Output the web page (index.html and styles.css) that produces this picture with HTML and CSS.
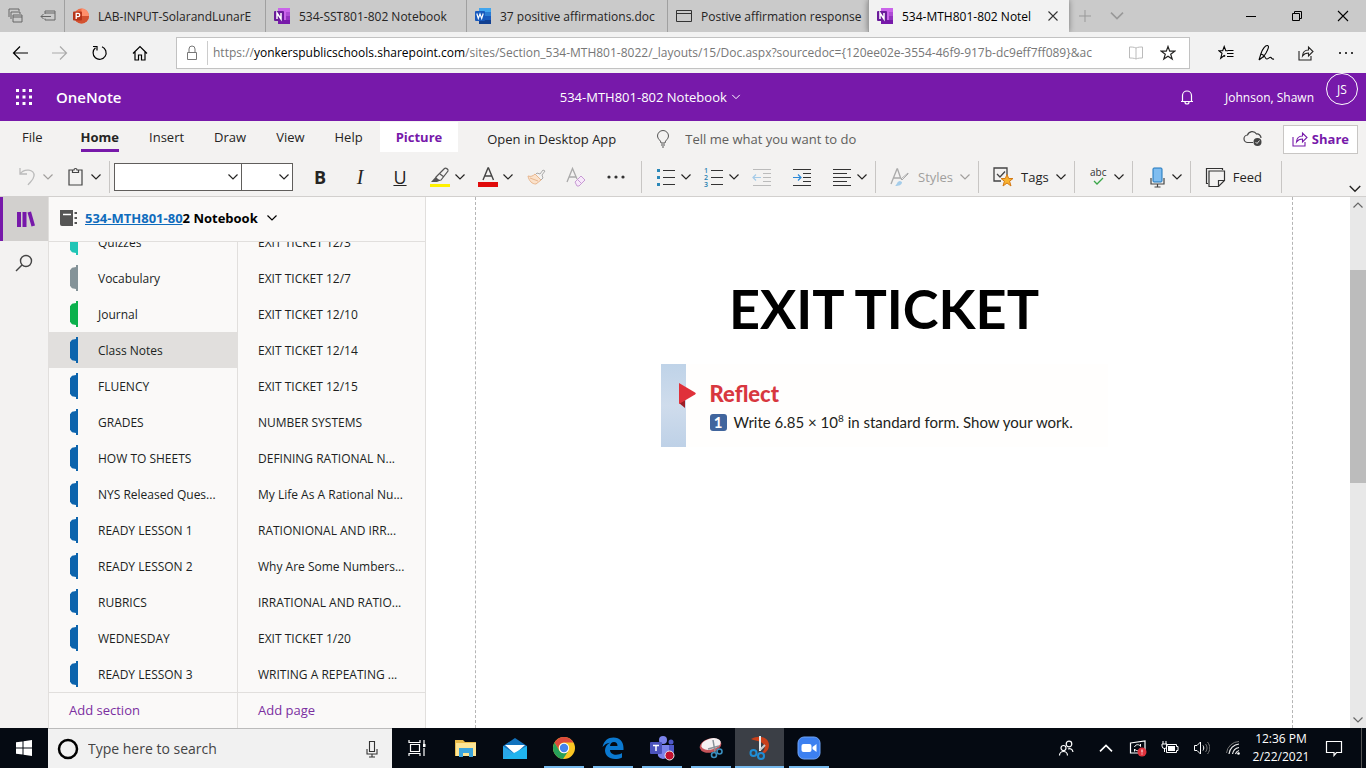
FILE: index.html
```
<!DOCTYPE html>
<html lang="en">
<head>
    <meta charset="UTF-8">
    <meta name="viewport" content="width=device-width, initial-scale=1.0">
    <title>534-MTH801-802 Notebook</title>
    <link rel="stylesheet" href="styles.css">
</head>
<body>
    <!-- Shared icons -->
    <svg class="defs" width="0" height="0">
        <symbol id="chev" viewBox="0 0 12 12"><path d="M1.5 3.5L6 8l4.5-4.5" fill="none" stroke="currentColor" stroke-width="1.2"/></symbol>
        <symbol id="onenote" viewBox="0 0 16 16"><path d="M4 0h12v16H4z" fill="#ca64ea"/><path d="M12 4h4v4h-4z" fill="#ae4bd5"/><path d="M12 8h4v4h-4z" fill="#9332bf"/><path d="M4 12h12v4H4z" fill="#7719aa"/><rect y="3" width="10" height="10" rx="1" fill="#6a1b9a"/><path d="M3 11V5l4 6V5" fill="none" stroke="#fff" stroke-width="1.5"/></symbol>
        <symbol id="star" viewBox="0 0 16 16"><path d="M8 1.5l1.7 4.7h5l-4 3 1.5 4.9L8 11.2l-4.2 2.9 1.5-4.9-4-3h5z" fill="none" stroke="currentColor" stroke-width="1.2"/></symbol>
        <symbol id="share" viewBox="0 0 16 16"><path d="M1 6v9h12v-4M4.5 11c.3-4 2.5-6 6-6V2L15 6.5 10.5 11V8c-2.5 0-4.5.8-6 3z" fill="none" stroke="currentColor" stroke-width="1.1"/></symbol>
    </svg>

    <!-- Browser tabs -->
    <div class="tab-strip">
        <button class="strip-btn" aria-label="Tabs set aside"><svg width="16" height="16" viewBox="0 0 16 16"><path d="M1 9V1h10v2M3 11V4h9v2M5 7h9v7H5zM5 9h9" fill="none" stroke="#666"/></svg></button>
        <button class="strip-btn" aria-label="Set tabs aside"><svg width="16" height="16" viewBox="0 0 16 16"><path d="M5 6V3h10v9H5v-1.5M5 5h10M11 8.5H1M3.5 6L1 8.5 3.5 11" fill="none" stroke="#666"/></svg></button>
        <a class="tab" href="#">
            <svg width="16" height="16" viewBox="0 0 16 16"><circle cx="8.5" cy="8" r="7.5" fill="#ed6c47"/><path d="M8.5.5A7.5 7.5 0 0 1 16 8H8.5z" fill="#ff8f6b"/><path d="M1 8h15a7.5 7.5 0 0 1-15 0z" fill="#d35230"/><rect y="3.5" width="9" height="9" rx="1" fill="#b7351a"/><path d="M3.2 11V5.3h1.9a1.5 1.5 0 0 1 0 3.3H3.5" fill="none" stroke="#fff" stroke-width="1.3"/></svg>
            <span>LAB-INPUT-SolarandLunarE</span>
        </a>
        <a class="tab" href="#">
            <svg width="16" height="16"><use href="#onenote"/></svg>
            <span>534-SST801-802 Notebook</span>
        </a>
        <a class="tab" href="#">
            <svg width="16" height="16" viewBox="0 0 16 16"><path d="M4 0h12v4H4z" fill="#41a5ee"/><path d="M4 4h12v4H4z" fill="#2b7cd3"/><path d="M4 8h12v4H4z" fill="#185abd"/><path d="M4 12h12v4H4z" fill="#103f91"/><rect y="3" width="10" height="10" rx="1" fill="#185abd"/><path d="M1.8 5.5l1.5 5L5 6l1.7 4.5 1.5-5" fill="none" stroke="#fff" stroke-width="1.2"/></svg>
            <span>37 positive affirmations.doc</span>
        </a>
        <a class="tab" href="#">
            <svg width="16" height="16" viewBox="0 0 16 16"><path d="M.5 2.5h15v11H.5zM.5 5.5h15" fill="none" stroke="#333"/></svg>
            <span>Postive affirmation response</span>
        </a>
        <a class="tab active" href="#">
            <svg width="16" height="16"><use href="#onenote"/></svg>
            <span>534-MTH801-802 Notel</span>
            <svg width="12" height="12" viewBox="0 0 12 12"><path d="M1.5 1.5l9 9m0-9l-9 9" stroke="#333" stroke-width="1.1"/></svg>
        </a>
        <button class="strip-btn faint" aria-label="New tab"><svg width="14" height="14" viewBox="0 0 14 14"><path d="M7 1v12M1 7h12" stroke="currentColor"/></svg></button>
        <button class="strip-btn faint" aria-label="Tab previews"><svg width="16" height="16"><use href="#chev"/></svg></button>
        <div class="window-btns">
            <button aria-label="Minimize"><svg width="12" height="12" viewBox="0 0 12 12"><path d="M1 6.5h10" stroke="#000"/></svg></button>
            <button aria-label="Restore"><svg width="12" height="12" viewBox="0 0 12 12"><path d="M1.5 3.5h7v7h-7zM3.5 3.5v-2h7v7h-2" fill="none" stroke="#000"/></svg></button>
            <button aria-label="Close"><svg width="12" height="12" viewBox="0 0 12 12"><path d="M1 1l10 10m0-10L1 11" stroke="#000" stroke-width="1.1"/></svg></button>
        </div>
    </div>

    <!-- Address bar -->
    <div class="nav-bar">
        <button aria-label="Back"><svg width="16" height="16" viewBox="0 0 16 16"><path d="M16 8H1.5M8 1.5L1.5 8 8 14.5" fill="none" stroke="#000" stroke-width="1.2"/></svg></button>
        <button aria-label="Forward"><svg width="16" height="16" viewBox="0 0 16 16"><path d="M0 8h14.5M8 1.5L14.5 8 8 14.5" fill="none" stroke="#aaa" stroke-width="1.2"/></svg></button>
        <button aria-label="Refresh"><svg width="16" height="16" viewBox="0 0 16 16"><path d="M3.5 2.8a6.5 6.5 0 1 0 6.5-1M1 1.5h4v4" fill="none" stroke="#000" stroke-width="1.2"/></svg></button>
        <button aria-label="Home"><svg width="16" height="16" viewBox="0 0 16 16"><path d="M1 8.5L8 1.5l7 7M3 7v8h3.5v-5h3v5H13V7" fill="none" stroke="#000" stroke-width="1.2"/></svg></button>
        <div class="address">
            <svg width="16" height="16" viewBox="0 0 16 16"><path d="M3.5 7.5h9v7h-9zM5 7.5V4a3 3 0 0 1 6 0v3.5" fill="none" stroke="#777"/></svg>
            <div class="url" role="textbox" aria-label="Address" contenteditable="true" spellcheck="false">https://<b>yonkerspublicschools.sharepoint.com</b>/sites/Section_534-MTH801-8022/_layouts/15/Doc.aspx?sourcedoc={120ee02e-3554-46f9-917b-dc9eff7ff089}&amp;ac</div>
            <button aria-label="Reading view"><svg width="16" height="16" viewBox="0 0 16 16"><path d="M8 3c-2-1-4.5-1-6.5-1v11c2 0 4.5 0 6.5 1 2-1 4.5-1 6.5-1V2c-2 0-4.5 0-6.5 1zm0 0v11" fill="none" stroke="#bbb"/></svg></button>
            <button aria-label="Favorite"><svg width="16" height="16"><use href="#star"/></svg></button>
        </div>
        <button aria-label="Favorites"><svg width="16" height="16" viewBox="0 0 16 16"><path d="M10 5.8H7.8L6.2 1.5 4.7 5.8H.8l3.2 2.5-1.3 4.9L6.2 10.5l1 .8M9 8.5h6.5M9 11.5h6.5M10 5.5h5.5" fill="none" stroke="#000" stroke-width="1.1"/></svg></button>
        <button aria-label="Notes"><svg width="18" height="18" viewBox="0 0 18 18"><path d="M2 16l2-6.5C5.5 5 8.5 1 10.5 1.5s.5 4-1.5 7.5L6 13.5M4 10l3 1.5M2 16l4.5-3.5c2-1 1.5 3 3.5 2.5s3-2.5 4-1.5 1.5 2 3 1.5" fill="none" stroke="#000" stroke-width="1.1"/></svg></button>
        <button aria-label="Share page"><svg width="16" height="16"><use href="#share"/></svg></button>
        <button aria-label="More"><svg width="16" height="16" viewBox="0 0 16 16"><circle cx="2" cy="8" r="1"/><circle cx="8" cy="8" r="1"/><circle cx="14" cy="8" r="1"/></svg></button>
    </div>

    <!-- OneNote header -->
    <header class="app-header">
        <button class="waffle" aria-label="App launcher"><svg width="16" height="16" viewBox="0 0 16 16" fill="#fff"><path d="M0 0h3v3H0zM6.5 0h3v3h-3zM13 0h3v3h-3zM0 6.5h3v3H0zM6.5 6.5h3v3h-3zM13 6.5h3v3h-3zM0 13h3v3H0zM6.5 13h3v3h-3zM13 13h3v3h-3z"/></svg></button>
        <a class="brand" href="#">OneNote</a>
        <button class="doc-title">534-MTH801-802 Notebook <svg width="10" height="10"><use href="#chev"/></svg></button>
        <button class="bell" aria-label="Notifications"><svg width="16" height="16" viewBox="0 0 16 16"><path d="M2 12.5h12M3.5 12.5V6.5a4.5 4.5 0 0 1 9 0v6M6 13a2 2 0 0 0 4 0" fill="none" stroke="#fff" stroke-width="1.2"/></svg></button>
        <span class="user">Johnson, Shawn</span>
        <button class="avatar">JS</button>
    </header>

    <!-- Ribbon -->
    <div class="ribbon-tabs">
        <button class="file">File</button>
        <button class="selected">Home</button>
        <button>Insert</button>
        <button>Draw</button>
        <button>View</button>
        <button>Help</button>
        <button class="context">Picture</button>
        <a class="desktop-link" href="#">Open in Desktop App</a>
        <svg width="14" height="18" viewBox="0 0 14 18"><path d="M5 13c0-3-3.5-3.5-3.5-7a5.5 5.5 0 0 1 11 0c0 3.5-3.5 4-3.5 7zM5 15h4M6 17h2" fill="none" stroke="#555"/></svg>
        <input class="tell-me" type="text" aria-label="Tell me what you want to do" placeholder="Tell me what you want to do">
        <svg width="20" height="18" viewBox="0 0 20 18"><path d="M10 12.5H5A3.7 3.7 0 0 1 4.5 5a5 5 0 0 1 9-1A4 4 0 0 1 18 8" fill="none" stroke="#444" stroke-width="1.2"/><circle cx="14.5" cy="12" r="4" fill="#444"/><path d="M12.5 12l1.5 1.5 2.5-3" fill="none" stroke="#ddd"/></svg>
        <button class="share-btn"><svg width="16" height="16"><use href="#share"/></svg>Share</button>
    </div>
    <div class="toolbar">
        <button class="tool undo" aria-label="Undo"><svg width="24" height="24" viewBox="0 0 24 24"><path d="M4 3v6h7M4 9c4-6 15-5 14 2-.5 4-4 6-6 9" fill="none" stroke="#bbb" stroke-width="1.3"/></svg><svg class="chev"><use href="#chev"/></svg></button>
        <button class="tool" aria-label="Paste"><svg width="24" height="24" viewBox="0 0 24 24"><path d="M9 5H5v15h13V5h-4M8.5 7.5V5H10a1.5 1.5 0 0 1 3 0h1.5v2.5z" fill="none" stroke="#444" stroke-width="1.2"/></svg><svg class="chev"><use href="#chev"/></svg></button>
        <i class="sep"></i>
        <label class="drop font-name"><select aria-label="Font"><option></option></select><svg class="chev"><use href="#chev"/></svg></label>
        <label class="drop font-size"><select aria-label="Font size"><option></option></select><svg class="chev"><use href="#chev"/></svg></label>
        <button class="tool letter"><b>B</b></button>
        <button class="tool letter"><em>I</em></button>
        <button class="tool letter"><u>U</u></button>
        <button class="tool" aria-label="Highlight"><svg width="24" height="24" viewBox="0 0 24 24"><path d="M2 19h20v3H2z" fill="#fff100"/><path d="M8 12l8.5-8.5c1-1 4 .5 3.5 2.5L13 15l-3 .5-2-1.5zM12 9l4 3" fill="none" stroke="#555" stroke-width="1.2"/><path d="M7.5 12L12 15.5 9 17H3z" fill="#555"/></svg><svg class="chev"><use href="#chev"/></svg></button>
        <button class="tool" aria-label="Font color"><svg width="24" height="24" viewBox="0 0 24 24"><path d="M2 17h20v5H2z" fill="#e00b0b"/><path d="M7 15l5-12h.5l5 12M8.5 11h7.5" fill="none" stroke="#444" stroke-width="1.4"/></svg><svg class="chev"><use href="#chev"/></svg></button>
        <button class="tool" aria-label="Format painter"><svg width="24" height="24" viewBox="0 0 24 24"><path d="M13 8l3 1 3-4 2 1-3 4 1 3-2 2-6-5z" fill="none" stroke="#aaa"/><path d="M11 9l6 6-5 4C8 19 5 16 4 11c3 1 5 0 7-2z" fill="#fbe2cb" stroke="#e8b68e"/><path d="M6 13l8 3" stroke="#e8b68e"/></svg></button>
        <button class="tool" aria-label="Clear formatting"><svg width="24" height="24" viewBox="0 0 24 24"><path d="M3 17L8.5 3.5 13 14M5 12h7" fill="none" stroke="#aaa" stroke-width="1.3"/><path d="M11 17l6-6 4 4-6 6h-2z" fill="#f7e8fa" stroke="#c79bd4"/><path d="M13.5 14.5l4 4" stroke="#c79bd4"/></svg></button>
        <button class="tool" aria-label="More font options"><svg width="24" height="24" viewBox="0 0 24 24" fill="#333"><circle cx="5" cy="12" r="1.6"/><circle cx="12" cy="12" r="1.6"/><circle cx="19" cy="12" r="1.6"/></svg></button>
        <i class="sep"></i>
        <button class="tool" aria-label="Bullets"><svg width="24" height="24" viewBox="0 0 24 24"><path d="M9 5.5h12M9 12.5h12M9 19.5h12" stroke="#333" stroke-width="1.2"/><path d="M3 4h3v3H3zM3 11h3v3H3zM3 18h3v3H3z" fill="#2b88b8"/></svg><svg class="chev"><use href="#chev"/></svg></button>
        <button class="tool" aria-label="Numbering"><svg width="24" height="24" viewBox="0 0 24 24"><path d="M9 5.5h12M9 12.5h12M9 19.5h12" stroke="#333" stroke-width="1.2"/><g fill="#1f7fb0" font-family="Open Sans, sans-serif" font-size="7" font-weight="600"><text x="2" y="8">1</text><text x="2" y="15">2</text><text x="2" y="22">3</text></g></svg><svg class="chev"><use href="#chev"/></svg></button>
        <button class="tool" aria-label="Decrease indent"><svg width="24" height="24" viewBox="0 0 24 24"><path d="M3 4.5h18M13 8.5h8M13 12.5h8M13 16.5h8M3 20.5h18" stroke="#bbb" stroke-width="1.2"/><path d="M11 12.5H3M6 9.5l-3 3 3 3" fill="none" stroke="#a5cbe8" stroke-width="1.2"/></svg></button>
        <button class="tool" aria-label="Increase indent"><svg width="24" height="24" viewBox="0 0 24 24"><path d="M3 4.5h18M13 8.5h8M13 12.5h8M13 16.5h8M3 20.5h18" stroke="#333" stroke-width="1.2"/><path d="M3 12.5h8M8 9.5l3 3-3 3" fill="none" stroke="#2b88d8" stroke-width="1.2"/></svg></button>
        <button class="tool" aria-label="Align"><svg width="24" height="24" viewBox="0 0 24 24"><path d="M3 4.5h18M3 8.5h14M3 12.5h18M3 16.5h14M3 20.5h18" stroke="#333" stroke-width="1.2"/></svg><svg class="chev"><use href="#chev"/></svg></button>
        <i class="sep"></i>
        <button class="tool" disabled><svg width="24" height="24" viewBox="0 0 24 24"><path d="M3 19L9 4h.5L13 14M5.5 13H12" fill="none" stroke="#aaa" stroke-width="1.3"/><path d="M20 9l-6 6-1-1 7-6z" fill="#fff" stroke="#aaa"/><path d="M7 21c2-1 2-5 5-5l2 1c0 3-3 4-7 4z" fill="#a5cdea"/></svg><span>Styles</span><svg class="chev"><use href="#chev"/></svg></button>
        <i class="sep"></i>
        <button class="tool"><svg width="24" height="24" viewBox="0 0 24 24"><path d="M10 16H3V3h13v7" fill="none" stroke="#444" stroke-width="1.3"/><path d="M6 9l3 3 5-5.5" fill="none" stroke="#444" stroke-width="1.3"/><path d="M16 9.5l1.7 4h4.3l-3.4 2.7 1.4 4.8-4-3-4 3 1.4-4.8L10 13.5h4.3z" fill="#f9b32f" stroke="#d47a14"/></svg><span>Tags</span><svg class="chev"><use href="#chev"/></svg></button>
        <i class="sep"></i>
        <button class="tool" aria-label="Spelling"><svg width="24" height="24" viewBox="0 0 24 24"><text x="3" y="11" font-family="Open Sans, sans-serif" font-size="10" fill="#333">abc</text><path d="M7 16l3 3 6-6" fill="none" stroke="#3aa648" stroke-width="1.3"/></svg><svg class="chev"><use href="#chev"/></svg></button>
        <i class="sep"></i>
        <button class="tool" aria-label="Dictate"><svg width="24" height="24" viewBox="0 0 24 24"><rect x="8" y="3" width="9" height="14" rx="1" fill="#7fbdf0" stroke="#1b75bc"/><path d="M6 13v6h13v-6M12.5 19v3M9.5 22h6" fill="none" stroke="#444" stroke-width="1.2"/></svg><svg class="chev"><use href="#chev"/></svg></button>
        <i class="sep"></i>
        <button class="tool feed"><svg width="24" height="24" viewBox="0 0 24 24"><path d="M5 18.5H3.5V3.5h16V5M6 6h15.5v9.5l-6 6H6zM21.5 15.5h-6v6" fill="none" stroke="#333" stroke-width="1.2"/></svg><span>Feed</span></button>
        <i class="sep"></i>
        <button class="collapse" aria-label="Collapse ribbon"><svg width="14" height="14"><use href="#chev"/></svg></button>
    </div>

    <main class="workspace">
        <div class="rail">
            <button class="selected" aria-label="Notebooks"><svg width="20" height="18" viewBox="0 0 20 18" fill="#7719aa"><path d="M1 2h4v15H1zM6.5 2h4v15h-4zM11.5 2.5L15 1.5l4 14-3.5 1z"/></svg></button>
            <button aria-label="Search"><svg width="18" height="18" viewBox="0 0 18 18"><circle cx="11" cy="7" r="5.5" fill="none" stroke="#444" stroke-width="1.4"/><path d="M7 11l-6 6" stroke="#444" stroke-width="1.4"/></svg></button>
        </div>

        <nav class="sidebar">
            <div class="notebook">
                <svg width="17" height="18" viewBox="0 0 17 18"><path d="M0 1h13v16H2a2 2 0 0 1-2-2zM14.5 3H17v2h-2.5zM14.5 8H17v2h-2.5zM14.5 13H17v2h-2.5z" fill="#555"/><path d="M3 5.5h8" stroke="#fff" stroke-width="1.5"/></svg>
                <a href="#"><u>534-MTH801-80</u>2 Notebook</a>
                <svg width="12" height="12"><use href="#chev"/></svg>
            </div>
            <div class="column sections">
                <ul>
                    <li class="teal"><a href="#">Quizzes</a></li>
                    <li class="gray"><a href="#">Vocabulary</a></li>
                    <li class="green"><a href="#">Journal</a></li>
                    <li class="current"><a href="#">Class Notes</a></li>
                    <li><a href="#">FLUENCY</a></li>
                    <li><a href="#">GRADES</a></li>
                    <li><a href="#">HOW TO SHEETS</a></li>
                    <li><a href="#">NYS Released Ques...</a></li>
                    <li><a href="#">READY LESSON 1</a></li>
                    <li><a href="#">READY LESSON 2</a></li>
                    <li><a href="#">RUBRICS</a></li>
                    <li><a href="#">WEDNESDAY</a></li>
                    <li><a href="#">READY LESSON 3</a></li>
                </ul>
                <button class="add">Add section</button>
            </div>
            <div class="column pages">
                <ul>
                    <li><a href="#">EXIT TICKET 12/3</a></li>
                    <li><a href="#">EXIT TICKET 12/7</a></li>
                    <li><a href="#">EXIT TICKET 12/10</a></li>
                    <li><a href="#">EXIT TICKET 12/14</a></li>
                    <li><a href="#">EXIT TICKET 12/15</a></li>
                    <li><a href="#">NUMBER SYSTEMS</a></li>
                    <li><a href="#">DEFINING RATIONAL N...</a></li>
                    <li><a href="#">My Life As A Rational Nu...</a></li>
                    <li><a href="#">RATIONIONAL AND IRR...</a></li>
                    <li><a href="#">Why Are Some Numbers...</a></li>
                    <li><a href="#">IRRATIONAL AND RATIO...</a></li>
                    <li><a href="#">EXIT TICKET 1/20</a></li>
                    <li><a href="#">WRITING A REPEATING ...</a></li>
                </ul>
                <button class="add">Add page</button>
            </div>
        </nav>

        <section class="canvas">
            <article class="page">
                <h1>EXIT TICKET</h1>
                <div class="problem">
                    <div class="strip"></div>
                    <svg width="20" height="28" viewBox="0 0 20 28"><path d="M2 22l6 5v-8z" fill="#9e1f26"/><path d="M2 2l16 9.5c1 .7 1 1.3 0 2L2 23z" fill="#e0313a"/></svg>
                    <div class="problem-text">
                        <h2>Reflect</h2>
                        <p><span class="num">1</span>Write 6.85 × 10<sup>8</sup> in standard form. Show your work.</p>
                    </div>
                </div>
            </article>
        </section>

        <div class="scrollbar">
            <svg width="12" height="12"><use href="#chev" transform="rotate(180 6 6)"/></svg>
            <div class="track"><div class="thumb"></div></div>
            <svg width="12" height="12"><use href="#chev"/></svg>
        </div>
    </main>

    <!-- Windows taskbar -->
    <footer class="taskbar">
        <button class="start" aria-label="Start"><svg width="16" height="16" viewBox="0 0 16 16" fill="#fff"><path d="M0 2.3L6.5 1.4v6.1H0zM7.5 1.2L16 0v7.5H7.5zM0 8.5h6.5v6.1L0 13.7zM7.5 8.5H16V16l-8.5-1.2z"/></svg></button>
        <label class="search">
            <svg width="22" height="22" viewBox="0 0 22 22"><circle cx="11" cy="11" r="9" fill="none" stroke="#000" stroke-width="2.5"/></svg>
            <input type="text" aria-label="Type here to search" placeholder="Type here to search">
            <svg width="12" height="18" viewBox="0 0 12 18"><path d="M3.5 1.5h5v10h-5zM1 9v5h10V9M6 14v3M3 17h6" fill="none" stroke="#333" stroke-width="1.1"/></svg>
        </label>
        <button class="app" aria-label="Task view"><svg width="18" height="18" viewBox="0 0 18 18"><path d="M1 1v2.5h11V1M2.5 5.5h9v7h-9zM1 17v-2.5h11V17M16 1v4M16 9v8" fill="none" stroke="#fff" stroke-width="1.2"/><path d="M15 5h2.5v3H15z" fill="#fff"/></svg></button>
        <button class="app" aria-label="File Explorer"><svg width="24" height="24" viewBox="0 0 24 24"><path d="M1 4h8l2 2h11v14H1z" fill="#e9bb4a"/><path d="M2 7h20v13H2z" fill="#fde595"/><path d="M5 21v-9h14v9h-4v-4H9v4z" fill="#3ba4dc"/></svg></button>
        <button class="app" aria-label="Mail"><svg width="24" height="24" viewBox="0 0 24 24"><path d="M0 10L12 2l12 8v13H0z" fill="#1272bd"/><path d="M2 9h20l-10 9z" fill="#fff"/><path d="M0 10l12 8-8 5H0z" fill="#2aa7e8"/><path d="M24 10v13H0z" fill="#1fb4ee"/></svg></button>
        <button class="app open" aria-label="Chrome"><svg width="24" height="24" viewBox="0 0 24 24"><circle cx="12" cy="12" r="11" fill="#fbc623"/><path d="M2.5 6.5A11 11 0 0 1 21.5 6.5H12a5.5 5.5 0 0 0-4.8 8.2z" fill="#dd4a3c"/><path d="M2.5 6.5A11 11 0 0 0 11 23l5.7-8.5a5.5 5.5 0 0 1-9.5 0z" fill="#27a05a"/><circle cx="12" cy="12" r="5.2" fill="#fff"/><circle cx="12" cy="12" r="4.2" fill="#4583ec"/></svg></button>
        <button class="app open" aria-label="Edge"><svg width="24" height="24" viewBox="0 0 24 24"><path d="M1.5 11C3 4.5 7 1.5 12.5 1.5 19 1.5 22.5 6 22.5 12v2H9c.3 3.3 3 4.7 6 4.7 2.5 0 4.5-.6 6-1.6v4.4c-2 1-4.5 1.5-7 1.5-6 0-10-3.5-10-8.7 0-3.3 2-6.3 5-7.6-3 .4-5.5 1.8-7.5 4.3zM9 10h7.5c0-2.5-1.3-4-3.5-4S9.3 7.6 9 10z" fill="#0b79d0"/></svg></button>
        <button class="app open" aria-label="Teams"><svg width="28" height="28" viewBox="0 0 28 28"><circle cx="15" cy="6" r="4" fill="#7b83eb"/><circle cx="23" cy="8" r="2.5" fill="#5059c9"/><path d="M9 11h12v9a6 6 0 0 1-11 2z" fill="#7b83eb"/><path d="M21 11h5v7a4 4 0 0 1-5 3z" fill="#5059c9"/><rect x="2" y="8" width="12" height="12" rx="1" fill="#4b53bc"/><path d="M5 11.5h6M8 11.5V17" stroke="#fff" stroke-width="1.5"/><circle cx="21.5" cy="21.5" r="4.5" fill="#c4122f" stroke="#eee"/></svg></button>
        <button class="app open" aria-label="Snipping Tool"><svg width="24" height="24" viewBox="0 0 24 24"><ellipse cx="11.5" cy="9.5" rx="11" ry="7" fill="#c6545a" transform="rotate(-15 11.5 9.5)"/><ellipse cx="12" cy="8" rx="10" ry="5.5" fill="#f5f1f2" transform="rotate(-15 12 8)"/><path d="M14 4l2 12M9 13l11-3" stroke="#8a9299" stroke-width="1.5"/><g fill="none" stroke="#3a8fbf" stroke-width="1.6"><circle cx="15" cy="19" r="2.5"/><circle cx="20.5" cy="15.5" r="2.5"/></g></svg></button>
        <button class="app open focused" aria-label="Snip and Sketch"><svg width="24" height="24" viewBox="0 0 24 24"><path d="M3 3c9-5 18-1 18 6s-6 10-11 9c5-1 8-5 6-9S8 5 3 3z" fill="#c9401a"/><path d="M11 0h2v15h-2z" fill="#e8edf0"/><path d="M12 14l5-5" stroke="#ccc" stroke-width="2"/><g fill="none" stroke="#1f8ed6" stroke-width="2"><circle cx="5.5" cy="17" r="3"/><circle cx="13" cy="20" r="3"/></g></svg></button>
        <button class="app open" aria-label="Zoom"><svg width="24" height="24" viewBox="0 0 24 24"><rect x="1" y="1" width="22" height="22" rx="6" fill="#3c80f0" stroke="#6fa3f6"/><rect x="4.5" y="8" width="10" height="8" rx="2" fill="#fff"/><path d="M15.5 11l4-3v8l-4-3z" fill="#fff"/></svg></button>

        <div class="tray">
            <button class="people" aria-label="People"><svg width="16" height="16" viewBox="0 0 16 16"><circle cx="11" cy="4" r="2.8" fill="none" stroke="#fff" stroke-width="1.2"/><circle cx="5.5" cy="8" r="2.5" fill="none" stroke="#fff" stroke-width="1.2"/><path d="M1.5 15.5a4 4 0 0 1 8 0M10 9c2-1 4.5 0 5 3" fill="none" stroke="#fff" stroke-width="1.2"/></svg></button>
            <button aria-label="Show hidden icons"><svg width="16" height="16"><use href="#chev" transform="rotate(180 8 8)"/></svg></button>
            <button aria-label="Update required"><svg width="18" height="18" viewBox="0 0 18 18"><path d="M1.5 4L16 2v12L1.5 14z" fill="none" stroke="#fff" stroke-width="1.2"/><path d="M5.5 8c1-3 5-3 6-.5V5M11.5 9.5c-1 2.5-4.5 3-6 .5v2.5" fill="none" stroke="#fff"/><circle cx="13" cy="13" r="4.5" fill="#e0323c"/><path d="M13 10.5v3M13 14.5v1" stroke="#fff"/></svg></button>
            <button aria-label="Battery"><svg width="18" height="16" viewBox="0 0 18 16"><path d="M2 1v3M5 1v3M1 4h5v2a2 2 0 0 1-5 0zM3.5 8v4M5.5 12.5v-8h10v2H17v4h-1.5v2z" fill="none" stroke="#fff"/><path d="M7 6h7v5H7z" fill="#fff"/></svg></button>
            <button aria-label="Volume"><svg width="16" height="16" viewBox="0 0 16 16"><path d="M.5 5.5H3L6.5 2v12L3 10.5H.5z" fill="none" stroke="#fff"/><path d="M9 5.5c1 1.5 1 3.5 0 5" fill="none" stroke="#fff"/><path d="M11.5 4c2 2.5 2 5.5 0 8M13.5 2c3 4 3 8 0 12" fill="none" stroke="#777"/></svg></button>
            <button aria-label="Network"><svg width="16" height="16" viewBox="0 0 16 16"><path d="M3 14A11 11 0 0 1 13 4M6.5 14A8 8 0 0 1 13 7.5M9.5 14A5 5 0 0 1 13 10.5" fill="none" stroke="#eee" stroke-width="1.2"/><path d="M.5 13A13 13 0 0 1 13 1.5" fill="none" stroke="#777"/><circle cx="12.5" cy="13.5" r="1.3" fill="#fff"/></svg></button>
            <button class="clock"><time>12:36 PM</time><time>2/22/2021</time></button>
            <button class="action" aria-label="Action center"><svg width="18" height="18" viewBox="0 0 18 18"><path d="M1.5 2.5h15v11h-5l-2.5 3v-3H1.5z" fill="none" stroke="#fff" stroke-width="1.2"/></svg></button>
        </div>
    </footer>
</body>
</html>
```
FILE: styles.css
```
* {
    box-sizing: border-box;
}

body {
    margin: 0;
    height: 100vh;
    display: flex;
    flex-direction: column;
    overflow: hidden;
    font-family: "Open Sans", "Noto Sans", sans-serif;
    font-size: 13px;
    color: #252423;
    background: #fff;
}

button,
input,
select {
    font: inherit;
    color: inherit;
    background: none;
    border: 0;
    padding: 0;
    outline: 0;
}

button {
    display: flex;
    align-items: center;
    justify-content: center;
    white-space: nowrap;
}

a {
    color: inherit;
    text-decoration: none;
}

svg {
    flex: none;
}

.defs {
    position: absolute;
}

/* Browser tabs */
.tab-strip {
    display: flex;
    height: 32px;
    flex: none;
    background: #cacaca;
}

.strip-btn {
    width: 32px;
}

.faint {
    color: #999;
}

.tab {
    display: flex;
    align-items: center;
    gap: 9px;
    flex: 0 1 201px;
    min-width: 0;
    padding: 0 8px;
    border-left: 1px solid #a0a0a0;
    font-size: 12px;
}

.tab span {
    flex: 1;
    white-space: nowrap;
}

.tab.active {
    background: #f2f2f2;
    color: #000;
    padding-right: 10px;
    box-shadow: 0 0 6px rgba(0,0,0,0.4);
    clip-path: inset(0 -8px 0 -8px);
}

.window-btns {
    display: flex;
    margin-left: auto;
}

.window-btns button {
    width: 46px;
}

/* Address bar */
.nav-bar {
    display: flex;
    align-items: center;
    height: 41px;
    flex: none;
    background: #f2f2f2;
}

.nav-bar button {
    width: 40px;
    height: 32px;
}

.address {
    display: flex;
    align-items: center;
    flex: 1;
    min-width: 0;
    height: 32px;
    margin: 0 16px;
    padding-left: 7px;
    background: #fff;
    border: 1px solid #c2c2c2;
}

.url {
    flex: 1;
    min-width: 0;
    height: 24px;
    margin-left: 7px;
    padding-left: 5px;
    font-size: 12px;
    line-height: 24px;
    border-left: 1px solid #ccc;
    overflow: hidden;
    white-space: nowrap;
    color: #777;
}

.url b {
    font-weight: 400;
    color: #000;
}

.address .url + button {
    width: 32px;
}

.address button:last-child {
    width: 32px;
    margin-right: 5px;
}

/* OneNote header */
.app-header {
    display: flex;
    align-items: center;
    height: 48px;
    flex: none;
    background: #7719aa;
    color: #fff;
}

.waffle {
    width: 48px;
    height: 48px;
}

.brand {
    margin-left: 8px;
    font-size: 15px;
    font-weight: 600;
}

.doc-title {
    flex: 1;
    gap: 4px;
}

.bell {
    width: 16px;
    margin-right: 30px;
}

.user {
    font-size: 12px;
}

.avatar {
    align-self: flex-start;
    width: 32px;
    height: 32px;
    margin: 0 8px 0 12px;
    border: 1px solid #fff;
    border-radius: 50%;
    font-size: 12px;
}

/* Ribbon */
.ribbon-tabs {
    display: flex;
    align-items: center;
    height: 36px;
    flex: none;
    padding-left: 7px;
    background: #f3f2f1;
}

.ribbon-tabs button {
    height: 30px;
    padding: 0 15px;
    margin-bottom: 4px;
}

.ribbon-tabs .file {
    margin-right: 8px;
}

.ribbon-tabs .selected {
    font-weight: 700;
    background: linear-gradient(#7719aa, #7719aa) center bottom / calc(100% - 30px) 3px no-repeat;
}

.ribbon-tabs .context {
    margin-left: 2px;
    padding: 0 16px;
    font-weight: 700;
    color: #7719aa;
    background: #fff;
}

.desktop-link {
    margin: 0 40px 0 29px;
}

.tell-me {
    flex: 1;
    min-width: 0;
    margin-left: 15px;
}

.tell-me::placeholder {
    color: #605e5c;
    opacity: 1;
}

.ribbon-tabs .share-btn {
    height: 29px;
    gap: 4px;
    margin: 0 8px 0 20px;
    padding: 0 8px;
    font-weight: 700;
    color: #7719aa;
    background: #fff;
    border: 1px solid #c8c6c4;
}

.toolbar {
    display: flex;
    align-items: center;
    height: 40px;
    flex: none;
    padding-left: 8px;
    background: #f3f2f1;
    border-bottom: 1px solid #d2d0ce;
}

.tool {
    height: 32px;
    padding-left: 8px;
}

.tool > svg:only-child,
.letter > * {
    margin-right: 8px;
}

.tool > span {
    margin: 0 4px 0 6px;
}

.tool:disabled,
.undo {
    color: #a19f9d;
}

.letter > * {
    width: 24px;
    font-size: 18px;
    text-align: center;
    font-weight: 400;
    line-height: 24px;
}

.letter b {
    font-weight: 700;
}

.letter em {
    font-family: "Liberation Serif", serif;
    font-size: 20px;
}

.chev {
    width: 12px;
    height: 12px;
    margin: 0 2px;
}

.feed {
    padding-right: 10px;
}

.sep {
    width: 1px;
    height: 32px;
    margin: 0 4px 0 5px;
    background: #c8c6c4;
}

.drop {
    display: grid;
    align-items: center;
    height: 28px;
    border: 1px solid #605e5c;
    background: #fff;
}

.drop > * {
    grid-area: 1 / 1;
}

.drop select {
    width: 100%;
    height: 26px;
    appearance: none;
}

.drop .chev {
    justify-self: end;
    pointer-events: none;
}

.font-name {
    width: 128px;
}

.font-size {
    width: 52px;
    margin: 0 7px 0 -1px;
}

.collapse {
    align-self: flex-end;
    margin: 0 4px 0 auto;
}

/* Notebook navigation */
.workspace {
    display: flex;
    flex: 1;
    min-height: 0;
}

.rail {
    width: 49px;
    flex: none;
    background: #f3f2f1;
    border-right: 1px solid #e1dfdd;
}

.rail button {
    width: 48px;
    height: 44px;
}

.rail .selected {
    background: #d2d0ce;
    border-left: 3px solid #7719aa;
}

.sidebar {
    display: grid;
    grid-template: 45px 1fr / 189px 187px;
    flex: none;
    background: #faf9f8;
    border-right: 1px solid #e1dfdd;
}

.notebook {
    grid-column: 1 / 3;
    display: flex;
    align-items: center;
    gap: 8px;
    padding: 0 0 2px 11px;
    font-weight: 700;
    color: #000;
    border-bottom: 1px solid #e1dfdd;
}

.notebook u {
    color: #0f6cbd;
}

.column {
    display: flex;
    flex-direction: column;
    min-height: 0;
}

.sections {
    border-right: 1px solid #e1dfdd;
}

.column ul {
    display: flex;
    flex-direction: column;
    justify-content: flex-end;
    flex: 1;
    min-height: 0;
    margin: 0;
    padding: 0;
    list-style: none;
    overflow: hidden;
}

.column li {
    display: flex;
    align-items: center;
    height: 36px;
    flex: none;
    padding-left: 20px;
    font-size: 12px;
    white-space: nowrap;
    color: #201f1e;
}

.sections li::before {
    content: "";
    width: 8px;
    height: 26px;
    margin: 0 20px 0 1px;
    background: #0c64ad;
    clip-path: polygon(0 20%, 25% 11%, 75% 8%, 75% 0, 100% 0, 100% 100%, 75% 100%, 75% 92%, 25% 89%, 0 80%);
}

.sections .teal::before {
    background: #20c5b5;
}

.sections .gray::before {
    background: #849398;
}

.sections .green::before {
    background: #0bb14c;
}

.sections .current {
    background: #e1dfdd;
}

.add {
    justify-content: flex-start;
    height: 36px;
    flex: none;
    padding: 0 0 2px 20px;
    border-top: 1px solid #e1dfdd;
    color: #7a2fa0;
}

/* Page */
.canvas {
    display: flex;
    flex: 1;
    min-width: 0;
}

.page {
    flex: 1;
    display: flex;
    flex-direction: column;
    align-items: center;
    margin: 0 57px 0 49px;
    padding-top: 80px;
    border: dashed #b5b5b5;
    border-width: 0 1px;
}

.page h1 {
    margin: 0 0 23px;
    font-family: Lato, sans-serif;
    font-size: 54px;
    font-weight: 700;
    line-height: 64px;
    color: #000;
}

.problem {
    display: flex;
    align-items: flex-start;
    width: 447px;
    height: 83px;
    font-family: Lato, sans-serif;
    color: #231f20;
    background: #fffefd;
}

.strip {
    width: 25px;
    height: 100%;
    background: linear-gradient(#bfd3e8, #cfdcec 50%, #bed1e7);
}

.problem > svg {
    margin: 17px 0 0 -9px;
}

.problem-text {
    padding: 16px 0 0 13px;
}

.problem h2 {
    margin: 0 0 4px;
    font-size: 22px;
    font-weight: 900;
    line-height: 28px;
    color: #d8373f;
}

.problem p {
    display: flex;
    align-items: center;
    margin: 0;
    font-size: 15px;
    line-height: 20px;
    white-space: pre;
}

.problem sup {
    font-size: 10px;
    line-height: 12px;
    align-self: flex-start;
}

.num {
    width: 17px;
    height: 17px;
    margin-right: 7px;
    border-radius: 3px;
    background: #41659d;
    color: #fff;
    font-weight: 700;
    line-height: 17px;
    text-align: center;
}

.scrollbar {
    display: flex;
    flex-direction: column;
    align-items: center;
    width: 16px;
    padding: 2px 0;
    background: #e8e8e8;
    color: #666;
}

.track {
    flex: 1;
    width: 100%;
    padding-top: 59px;
}

.thumb {
    height: 48%;
    background: #bcbcbc;
}

/* Taskbar */
.taskbar {
    display: flex;
    height: 40px;
    flex: none;
    background: #050a12;
    color: #fff;
}

.start {
    width: 48px;
}

.search {
    display: flex;
    align-items: center;
    width: 344px;
    padding: 0 14px 0 9px;
    background: #f1f1f1;
    border-top: 1px solid #bbb;
}

.search input {
    flex: 1;
    min-width: 0;
    margin-left: 9px;
    font-size: 14px;
}

.search input::placeholder {
    color: #444;
    opacity: 1;
}

.app {
    width: 49px;
}

.app.open {
    background: linear-gradient(#76b9ed, #76b9ed) center bottom / 40px 2px no-repeat;
}

.app.focused {
    background: linear-gradient(#76b9ed, #76b9ed) center bottom / 100% 2px no-repeat #3b3f46;
}

.tray {
    display: flex;
    margin-left: auto;
    padding-right: 4px;
}

.tray button {
    width: 32px;
}

.tray .people {
    width: 48px;
}

.tray .clock {
    flex-direction: column;
    width: 62px;
    font-size: 12px;
    line-height: 18px;
}

.tray .action {
    width: 50px;
    padding-right: 6px;
    border-right: 1px solid #555;
}
```
